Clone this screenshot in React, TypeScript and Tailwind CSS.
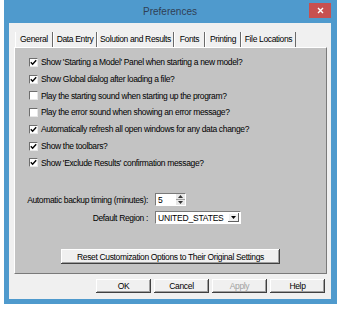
import React from "react";

const FONT = { fontFamily: '"Liberation Sans", Arial, sans-serif' };

function Check({ checked }: { checked: boolean }) {
  return (
    <div className="w-[9px] h-[9px] bg-white border-t border-l border-t-[#6e6e6e] border-l-[#6e6e6e] border-b border-r border-b-[#e8e8e8] border-r-[#e8e8e8] flex items-center justify-center shrink-0">
      {checked && (
        <svg width="7" height="7" viewBox="0 0 7 7">
          <path d="M0.8 3.3 L2.6 5.2 L6.2 1.2" fill="none" stroke="#000" strokeWidth="1.4" />
        </svg>
      )}
    </div>
  );
}

const rows: [boolean, string][] = [
  [true, "Show 'Starting a Model' Panel when starting a new model?"],
  [true, "Show Global dialog after loading a file?"],
  [false, "Play the starting sound when starting up the program?"],
  [false, "Play the error sound when showing an error message?"],
  [true, "Automatically refresh all open windows for any data change?"],
  [true, "Show the toolbars?"],
  [true, "Show 'Exclude Results' confirmation message?"],
];

const tabs: [string, number][] = [
  ["General", 38],
  ["Data Entry", 44],
  ["Solution and Results", 77],
  ["Fonts", 31],
  ["Printing", 36],
  ["File Locations", 55],
];

function Btn({ label, disabled }: { label: string; disabled?: boolean }) {
  return (
    <div
      className={`w-[55px] h-[14px] bg-[#f0f0f0] flex items-center justify-center whitespace-nowrap shadow-[inset_-1px_-1px_0_#404040,inset_1px_1px_0_#ffffff,inset_-2px_-2px_0_#a0a0a0] ${disabled ? "text-[#a0a0a0]" : "text-black"}`}
    >
      {label}
    </div>
  );
}

export default function App() {
  return (
    <div className="w-[343px] h-[309px] bg-white pl-[4px] text-[8.5px] tracking-[-0.35px] leading-none" style={FONT}>
      <div className="w-[333px] h-[304px] bg-[#4f9acd] flex flex-col pl-[5px] pr-[6px] pb-[5px]">
        <div className="h-[23px] relative flex items-center justify-center">
          <span className="text-[10px] tracking-normal text-[#2f3f55]">Preferences</span>
          <div className="absolute top-[3px] right-0 w-[22px] h-[15px] bg-[#c75050] flex items-center justify-center">
            <svg width="7" height="7" viewBox="0 0 7 7">
              <path d="M1 1 L6 6 M6 1 L1 6" stroke="#fff" strokeWidth="1.4" />
            </svg>
          </div>
        </div>
        <div className="flex-1 bg-[#f0f0f0] flex flex-col pl-[5px] pr-[4px]">
          <div className="h-[24px] flex items-end pl-[1px]">
            {tabs.map(([t, w]) => (
              <div
                key={t}
                className="h-[15px] flex items-center justify-center whitespace-nowrap text-black border-r border-r-[#6a6a6a] border-l border-l-white"
                style={{ width: w }}
              >
                {t}
              </div>
            ))}
          </div>
          <div className="h-[227px] bg-[#c3c3c3] border-t border-l border-t-white border-l-white border-b border-r border-b-[#7a7a7a] border-r-[#7a7a7a] flex flex-col pt-[6px] text-black whitespace-nowrap">
            <div className="flex flex-col pl-[14px]">
              {rows.map(([c, t]) => (
                <div key={t} className="h-[16.75px] flex items-center gap-[3px]">
                  <Check checked={c} />
                  <span>{t}</span>
                </div>
              ))}
            </div>
            <div className="mt-[22px] flex items-center h-[13px]">
              <div className="w-[133px] text-right">Automatic backup timing (minutes):</div>
              <div className="ml-[7px] flex h-[13px] bg-white border-t border-l border-t-[#7a7a7a] border-l-[#7a7a7a] border-b border-r border-b-white border-r-white">
                <div className="w-[20px] pl-[2px] flex items-center">5</div>
                <div className="w-[9px] flex flex-col bg-[#e8e8e8]">
                  <div className="flex-1 flex items-center justify-center border-b border-b-[#a0a0a0]">
                    <svg width="5" height="3" viewBox="0 0 5 3"><path d="M0 3 L2.5 0 L5 3Z" fill="#333" /></svg>
                  </div>
                  <div className="flex-1 flex items-center justify-center">
                    <svg width="5" height="3" viewBox="0 0 5 3"><path d="M0 0 L2.5 3 L5 0Z" fill="#333" /></svg>
                  </div>
                </div>
              </div>
            </div>
            <div className="mt-[5px] flex items-center h-[13px]">
              <div className="w-[133px] text-right">Default Region :</div>
              <div className="ml-[7px] w-[86px] flex h-[13px] bg-white border-t border-l border-t-[#7a7a7a] border-l-[#7a7a7a] border-b border-r border-b-white border-r-white">
                <div className="flex-1 pl-[2px] flex items-center tracking-[-0.2px]">UNITED_STATES</div>
                <div className="w-[11px] my-[1px] mr-[1px] bg-[#f0f0f0] flex items-center justify-center shadow-[inset_-1px_-1px_0_#606060,inset_1px_1px_0_#ffffff]">
                  <svg width="5" height="3" viewBox="0 0 5 3"><path d="M0 0 L2.5 3 L5 0Z" fill="#000" /></svg>
                </div>
              </div>
            </div>
            <div className="mt-[25px] flex justify-center">
              <div className="w-[219px] h-[15px] bg-[#f0f0f0] flex items-center justify-center shadow-[inset_-1px_-1px_0_#404040,inset_1px_1px_0_#ffffff,inset_-2px_-2px_0_#a0a0a0]">
                Reset Customization Options to Their Original Settings
              </div>
            </div>
          </div>
          <div className="mt-[5px] flex justify-end gap-[3px] pr-[2px]">
            <Btn label="OK" />
            <Btn label="Cancel" />
            <Btn label="Apply" disabled />
            <Btn label="Help" />
          </div>
        </div>
      </div>
    </div>
  );
}
